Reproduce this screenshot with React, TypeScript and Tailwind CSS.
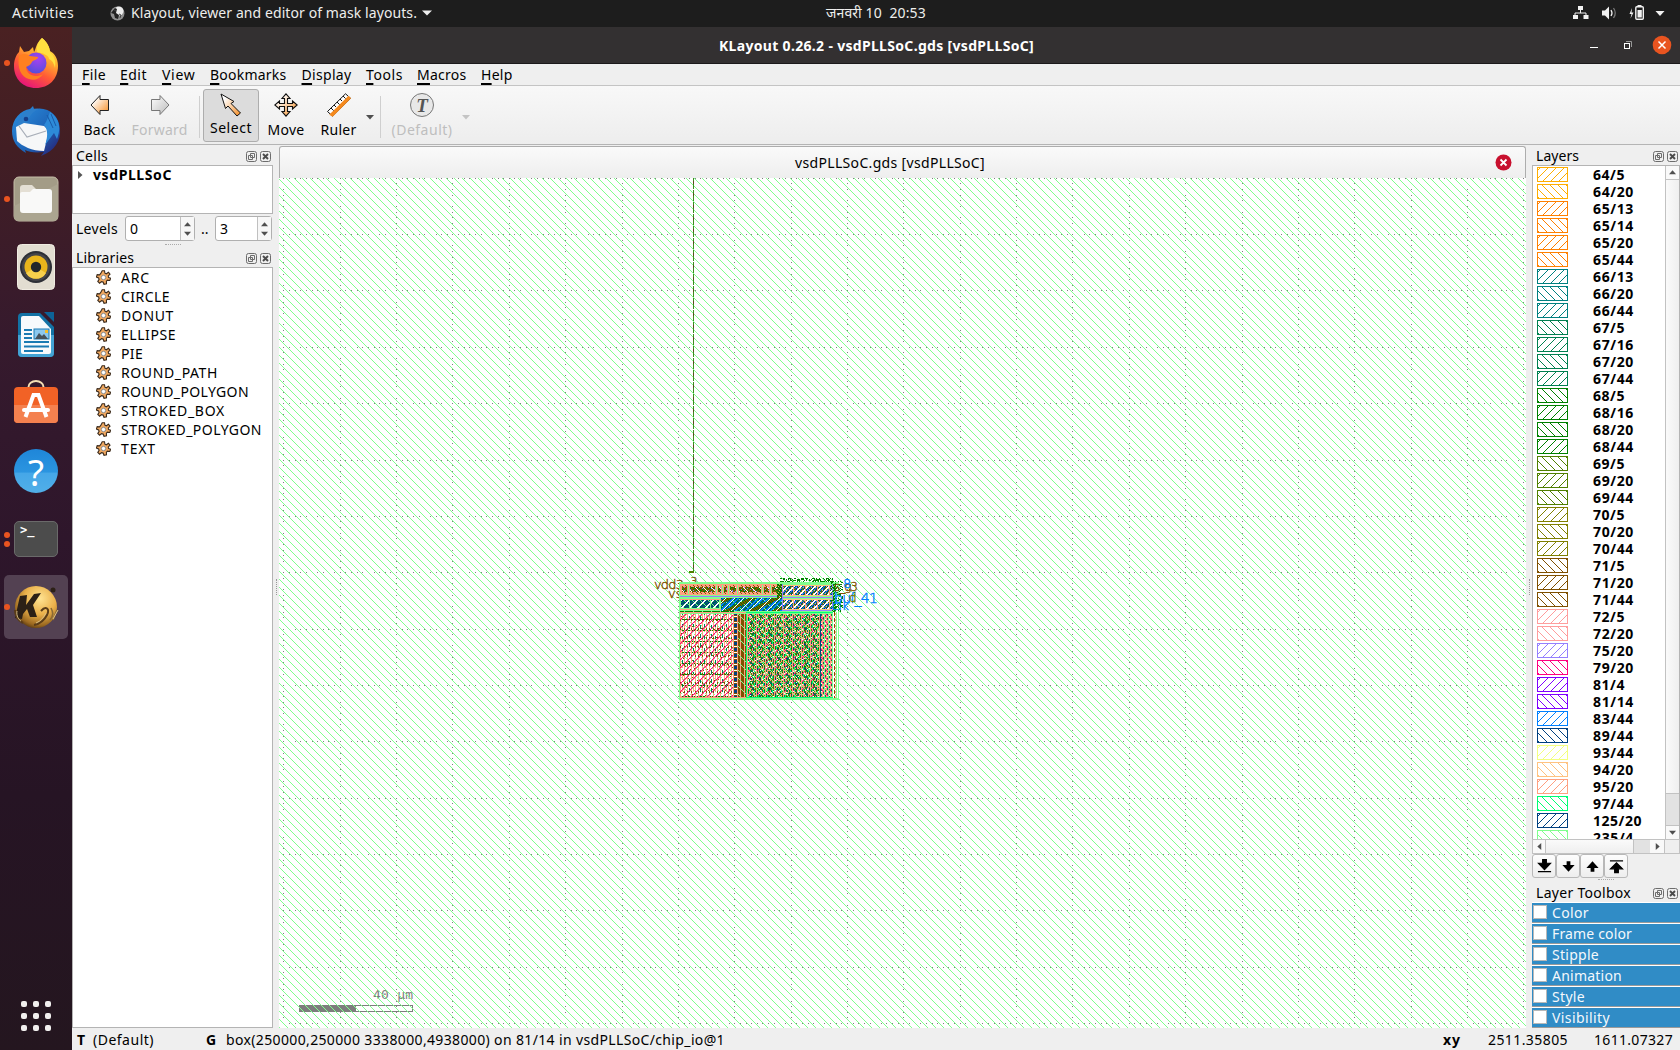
import React, { useLayoutEffect, useRef, useState } from "react";

/* Text run whose letter spacing is tuned so that it fills a given width. */
function Fit({ w, children, className = "" }: { w: number; children: React.ReactNode; className?: string }) {
  const ref = useRef<HTMLSpanElement>(null);
  const [ls, setLs] = useState(0);
  useLayoutEffect(() => {
    const el = ref.current;
    if (!el) return;
    const n = (el.textContent || "").length;
    setLs((w - el.getBoundingClientRect().width) / n);
  }, [w]);
  return (
    <span ref={ref} className={"inline-block shrink-0 whitespace-pre " + className} style={{ letterSpacing: ls }}>
      {children}
    </span>
  );
}

/* ---------- dock icons ---------- */
const Firefox = () => (
  <svg width="48" height="52" viewBox="0 0 48 52">
    <defs>
      <linearGradient id="ff1" x1="0.8" y1="0" x2="0.3" y2="1">
        <stop offset="0" stopColor="#fff44f" />
        <stop offset="0.35" stopColor="#ffb02e" />
        <stop offset="0.65" stopColor="#ff5a36" />
        <stop offset="1" stopColor="#e6127d" />
      </linearGradient>
      <radialGradient id="ff2" cx="0.6" cy="0.3" r="0.8">
        <stop offset="0" stopColor="#a742f0" />
        <stop offset="1" stopColor="#4b4fd8" />
      </radialGradient>
    </defs>
    <path d="M30 1c4 3 7 8 8 13 4 2 8 7 8 15 0 13-9 22-22 22S2 42 2 29c0-6 2-11 5-14l1-6 4 6 5-1 4-4 1 5c2-3 2-9 8-14z" fill="url(#ff1)" />
    <path d="M30 1c5 4 8 9 8 14 5 5 6 10 5 16-1-5-3-8-6-9 0-4-7-6-12-7-1-6 2-11 5-14z" fill="#ffe040" />
    <circle cx="24" cy="26" r="10.5" fill="url(#ff2)" />
    <path d="M7 19c4-3 8-2 11 0l8 1c0 3-5 3-6 5s-3 4-6 5c0 7 9 12 17 7-3 5-9 7-14 5C9 40 5 31 7 19z" fill="#ff8020" />
  </svg>
);

const Thunderbird = () => (
  <svg width="50" height="52" viewBox="0 0 50 52">
    <defs>
      <linearGradient id="tb" x1="0" y1="0" x2="1" y2="1">
        <stop offset="0" stopColor="#2c90e0" />
        <stop offset="0.6" stopColor="#1d62b5" />
        <stop offset="1" stopColor="#2a1468" />
      </linearGradient>
    </defs>
    <path d="M22 1l1 3c14-3 25 6 26 20 1 11-5 22-19 27l3-4c-9 1-15 0-19-2l1 3C6 43 1 36 1 26 1 14 10 5 19 4z" fill="url(#tb)" />
    <path d="M10 12c4-7 10-9 18-8-8 3-10 9-13 15-4 1-7 3-10 6 1-5 2-9 5-13z" fill="#2d7fcb" />
    <path d="M5 22l8-4 20 3 5 5-5 20C21 46 11 41 6 36z" fill="#f6f7f8" />
    <path d="M8 21l8 11 19-6" fill="none" stroke="#a8aeb8" strokeWidth="1.2" />
    <path d="M33 20c4 4 4 12 1 20l9-12 3 6c5-13 1-22-7-27-2 5-3 9-6 13z" fill="#2d8ad8" />
    <circle cx="15" cy="14" r="2.3" fill="#16408c" />
    <path d="M36 10l6 13M40 9l5 12" stroke="#1a5aa8" />
  </svg>
);

const Files = () => (
  <svg width="46" height="46" viewBox="0 0 46 46">
    <rect x="1" y="1" width="44" height="44" rx="5" fill="#a39c87" stroke="#c5bda8" />
    <path d="M1 30L45 8v33a4 4 0 01-4 4H5a4 4 0 01-4-4z" fill="#aba590" />
    <path d="M7 12q0-3 3-3h9l4 4v8H7z" fill="#e4dfd4" />
    <path d="M7 18q0-2 2-2h8l3-3h16q3 0 3 3v18q0 3-3 3H10q-3 0-3-3z" fill="#f9f9f8" />
  </svg>
);

const Rhythmbox = () => (
  <svg width="38" height="46" viewBox="0 0 38 46">
    <rect x="0.5" y="0.5" width="37" height="45" rx="4" fill="#e2ddd1" stroke="#f0ece2" />
    <circle cx="19" cy="23" r="16" fill="#2d2f36" />
    <circle cx="19" cy="23" r="14" fill="#45454a" />
    <circle cx="19" cy="23" r="11.5" fill="#eab51c" />
    <path d="M19 23L9 29a11.500 11.500 0 0020 0z" fill="#f6cf4c" />
    <circle cx="19" cy="23" r="5.200" fill="#23262b" />
  </svg>
);

const Writer = () => (
  <svg width="38" height="46" viewBox="0 0 38 46">
    <path d="M1 5q0-4 4-4h18l14 14v26q0 4-4 4H5q-4 0-4-4z" fill="#1272a5" />
    <path d="M1 23h36v18q0 4-4 4H5q-4 0-4-4z" fill="#43a3d4" />
    <path d="M4 6q0-2 2-2h16l12 13v23q0 2-2 2H6q-2 0-2-2z" fill="#f7fafc" />
    <path d="M27 0h10v10z" fill="#0d6397" />
    <path d="M7 18h8M7 22h8M7 26h8M7 30h25M7 34.500h25M7 39h19" stroke="#1a7bb3" strokeWidth="1.800" />
    <rect x="17" y="17" width="15" height="10" fill="#8cc8ee" stroke="#1a7bb3" />
    <path d="M18 27l4-6 3 3 2-2 4 5z" fill="#46525c" />
    <rect x="28" y="18" width="3" height="3" fill="#f5bf2a" />
  </svg>
);

const Software = () => (
  <svg width="46" height="46" viewBox="0 0 46 46">
    <path d="M15.500 9v-2a7.500 6 0 0115 0v2" fill="none" stroke="#f5dfb4" strokeWidth="2" />
    <rect x="1" y="7" width="44" height="36" rx="4" fill="#f16226" />
    <path d="M1 25h44v14a4 4 0 01-4 4H5a4 4 0 01-4-4z" fill="#f4814f" />
    <path d="M12.500 37l8-22h5l8 22" fill="none" stroke="#fff" strokeWidth="4" />
    <path d="M11 30h24" stroke="#fff" strokeWidth="4" strokeLinecap="round" />
  </svg>
);

const Help = () => (
  <span className="flex h-11 w-11 items-center justify-center rounded-full bg-[linear-gradient(#1f86d9_0%,#2b95e0_53%,#45a7e8_54%,#51afe8_100%)] text-[37px] leading-none text-white">
    ?
  </span>
);

const Terminal = () => (
  <span className="h-9 w-11 rounded-[5px] border border-[#6a6a6a] bg-[#4c4c4c] pl-[5px] pt-px font-['DejaVu_Sans_Mono'] text-[12px] font-bold leading-[14px] text-white">
    &gt;_
  </span>
);

const KBall = () => (
  <svg width="50" height="46" viewBox="0 0 50 46">
    <defs>
      <radialGradient id="kb" cx="0.6" cy="0.3" r="0.75">
        <stop offset="0" stopColor="#ffe392" />
        <stop offset="0.5" stopColor="#eab04a" />
        <stop offset="0.85" stopColor="#9a6820" />
        <stop offset="1" stopColor="#523410" />
      </radialGradient>
    </defs>
    <circle cx="25" cy="23" r="21" fill="url(#kb)" />
    <path d="M9 12l7-1-1 10 8-11 7-1-8 12 4 12h-7l-3-8-4 5-1 5-7-1c2-8 3-14 5-22z" fill="#2c2016" />
    <path d="M4 26c0 8 4 11 8 13M30 27c5-6 9-2 6 4s-8 9-13 10" fill="none" stroke="#5a3c18" strokeWidth="2" />
    <path d="M40 24c2 4 3 7-1 12M46 26l-4 10" fill="none" stroke="#8a6a34" strokeWidth="1.600" />
    <path d="M25 39c5-2 7-5 10-10M42 35l5-9M6 27c-1 5 2 9 4 10" fill="none" stroke="#d9bf84" />
    <circle cx="42" cy="6" r="2.500" fill="#2c2016" />
  </svg>
);

const dock: { icon: React.ReactNode; dots: number; active?: boolean }[] = [
  { icon: <Firefox />, dots: 1 },
  { icon: <Thunderbird />, dots: 0 },
  { icon: <Files />, dots: 1 },
  { icon: <Rhythmbox />, dots: 0 },
  { icon: <Writer />, dots: 0 },
  { icon: <Software />, dots: 0 },
  { icon: <Help />, dots: 0 },
  { icon: <Terminal />, dots: 2 },
  { icon: <KBall />, dots: 1, active: true },
];

function Dock() {
  return (
    <aside className="flex w-[72px] shrink-0 flex-col justify-between bg-[linear-gradient(#4a2122_0%,#421e24_12%,#361a2d_30%,#2e162b_50%,#261424_75%,#24161f_100%)]">
      <div className="flex flex-col gap-1 pt-1">
        {dock.map((d, i) => (
          <div key={i} className="flex h-16 items-center">
            <div className="flex w-1 flex-col items-start gap-[3px]">
              {Array.from({ length: d.dots }, (_, k) => (
                <i key={k} className="relative left-1 z-10 h-1.5 w-1.5 rounded-full bg-[#e95420]" />
              ))}
            </div>
            <div className={"flex h-16 w-16 items-center justify-center rounded-[5px] " + (d.active ? "bg-[#534152]" : "")}>{d.icon}</div>
          </div>
        ))}
      </div>
      <div className="mb-[19px] ml-[21px] grid w-[30px] grid-cols-3 gap-x-1.5 gap-y-1.5">
        {Array.from({ length: 9 }, (_, i) => (
          <i key={i} className="h-1.5 w-1.5 rounded-[2px] bg-[#f1efee]" />
        ))}
      </div>
    </aside>
  );
}

/* ---------- small drawings ---------- */
const Tri = ({ dir = "down", c = "#4f4f4f", s = 7 }: { dir?: string; c?: string; s?: number }) => (
  <svg width={s} height={s} viewBox="0 0 8 8" className="shrink-0">
    <path
      d={dir === "down" ? "M0 2h8L4 6.500z" : dir === "up" ? "M0 6h8L4 1.500z" : dir === "left" ? "M6 0v8L1.500 4z" : "M2 0v8L6.500 4z"}
      fill={c}
    />
  </svg>
);

const DockButtons = () => (
  <svg width="25" height="11" viewBox="0 0 25 11" className="shrink-0">
    <g fill="none" stroke="#6d6d6d">
      <rect x="0.500" y="0.500" width="10" height="10" rx="2" />
      <rect x="14.500" y="0.500" width="10" height="10" rx="2" />
      <path d="M4.500 2.500h4v4h-4zM2.500 4.500h4v4h-4z" />
    </g>
    <path d="M17 3l5 5M22 3l-5 5" stroke="#4a4a4a" strokeWidth="1.900" />
  </svg>
);

const PanelTitle = ({ t, w, className = "" }: { t: string; w: number; className?: string }) => (
  <div className={"flex shrink-0 items-center justify-between pl-1 " + className}>
    <Fit w={w}>{t}</Fit>
    <DockButtons />
  </div>
);

const Gear = () => (
  <svg width="15" height="15" viewBox="-7.500 -7.500 15 15">
    <g fill="#f0a860" stroke="#3a2a1c" strokeWidth="1.100">
      <path d="M-1.300-6.800h2.300l.4 2.500 1.400.6 2.200-1.600 1.500 2-1.700 1.700.2 1.500 2.200.8-.9 2.300-2.300-.4-1.100 1.100.1 2.600-2.500.5-.9-2.300-1.600-.4-1.900 1.600-1.800-1.800 1.300-2-.5-1.500-2.200-.8.8-2.400 2.300.2 1.100-1.200z" />
    </g>
    <circle r="2.200" fill="#fff" stroke="#8c8c8c" />
  </svg>
);

const Grad = () => (
  <svg width="0" height="0" className="absolute">
    <defs>
      <linearGradient id="org" x1="0" x2="1" y1="0" y2="1">
        <stop offset="0.200" stopColor="#fff" />
        <stop offset="1" stopColor="#f58a1e" />
      </linearGradient>
      <linearGradient id="gry" x1="0" x2="1" y1="0" y2="1">
        <stop offset="0" stopColor="#fff" />
        <stop offset="1" stopColor="#bbb" />
      </linearGradient>
    </defs>
  </svg>
);

const BackIcon = () => (
  <svg width="20" height="22" viewBox="0 0 20 22">
    <path d="M1 11L10 1.500v4h8.500v11H10v4z" fill="url(#org)" stroke="#222" />
  </svg>
);
const FwdIcon = () => (
  <svg width="20" height="22" viewBox="0 0 20 22">
    <path d="M19 11L10 1.500v4H1.500v11H10v4z" fill="url(#gry)" stroke="#777" />
  </svg>
);
const SelectIcon = () => (
  <svg width="24" height="24" viewBox="0 0 24 24">
    <path d="M2 1l13 7.500-3 2 9.500 9.500-3.500 3-9-10-2.500 2.500z" fill="url(#org)" stroke="#111" />
  </svg>
);
const MoveIcon = () => (
  <svg width="24" height="24" viewBox="0 0 24 24">
    <path d="M12 .8l4 4.700h-2.500v5h5V8l4.700 4-4.700 4v-2.500h-5v5H16l-4 4.700-4-4.700h2.500v-5h-5V16L.8 12l4.700-4v2.500h5v-5H8z" fill="url(#org)" stroke="#111" strokeWidth="1.100" />
  </svg>
);
const RulerIcon = () => (
  <svg width="26" height="24" viewBox="0 0 26 24">
    <path d="M1.500 18.500L19.500.8l5 4.500L6.500 23z" fill="#fff" stroke="#111" />
    <path d="M4.500 21.500L22.500 3.800l1.500 1.500L6.500 22.700z" fill="#f58a1e" stroke="#f58a1e" strokeWidth="1.500" />
    <path d="M5 15l2.500 2.500M8 12l2 2M11 9l2.500 2.500M14 6l2 2M17 3l2.500 2.500" stroke="#111" />
  </svg>
);

/* ---------- layer list ---------- */
const layers: [string, string][] = [
  ["64/5", "#ffae00"], ["64/20", "#ffae00"], ["65/13", "#ff8000"], ["65/14", "#ff8000"], ["65/20", "#ff8000"], ["65/44", "#ff8000"],
  ["66/13", "#008080"], ["66/20", "#008080"], ["66/44", "#008080"], ["67/5", "#008050"], ["67/16", "#008050"], ["67/20", "#008050"],
  ["67/44", "#008050"], ["68/5", "#008000"], ["68/16", "#008000"], ["68/20", "#008000"], ["68/44", "#008000"], ["69/5", "#508000"],
  ["69/20", "#508000"], ["69/44", "#508000"], ["70/5", "#808000"], ["70/20", "#808000"], ["70/44", "#808000"], ["71/5", "#805000"],
  ["71/20", "#805000"], ["71/44", "#805000"], ["72/5", "#ff9d9d"], ["72/20", "#ff9d9d"], ["75/20", "#9580ff"], ["79/20", "#ff0080"],
  ["81/4", "#8000ff"], ["81/14", "#8000ff"], ["83/44", "#0080ff"], ["89/44", "#004080"], ["93/44", "#f3ff80"], ["94/20", "#ffc280"],
  ["95/20", "#ffa080"], ["97/44", "#00ff73"], ["125/20", "#004080"], ["235/4", "#80ff8d"],
];

const Swatch = ({ c, fwd }: { c: string; fwd: boolean }) => (
  <svg width="31" height="15" viewBox="0 0 31 15" shapeRendering="crispEdges" className="shrink-0">
    <rect x="0.500" y="0.500" width="30" height="14" fill="#fff" stroke={c} />
    <path
      d={Array.from({ length: 29 * 13 }, (_, k) => [1 + (k % 29), 1 + Math.floor(k / 29)])
        .filter(([x, y]) => (fwd ? (x + y) % 8 === 3 : (x - y + 32) % 8 === 4))
        .map(([x, y]) => `M${x} ${y}h1v1h-1z`)
        .join("")}
      fill={c}
    />
  </svg>
);

/* ---------- layout canvas ---------- */
const X0 = 279, Y0 = 178, X1 = 1526, Y1 = 1028, STEP = 56.36;
const gridPath = (() => {
  let d = "";
  for (let k = 0; k <= 22; k++) {
    const x = Math.floor(283.9 + STEP * k);
    for (let j = 0; j <= 150; j++) d += `M${x} ${Math.floor(178.2 + (STEP / 10) * j)}h1v1h-1z`;
  }
  for (let k = 0; k <= 15; k++) {
    const y = Math.floor(178.2 + STEP * k);
    for (let j = 0; j <= 220; j++) d += `M${Math.floor(283.9 + (STEP / 10) * j)} ${y}h1v1h-1z`;
  }
  return d;
})();

const C = {
  g: "#80ff8d", s: "#ffa080", p: "#ff0080", t: "#008050", d: "#008000", b: "#805000", n: "#004080",
  v: "#9580ff", u: "#0080ff", e: "#00ff73", w: "#ffffff", c: "#ffc280", o: "#508000",
};
type K = keyof typeof C;
const m = (a: number, n: number) => ((a % n) + n) % n;

function chip(x: number, y: number): K | null {
  /* outer frame */
  if (x < 680 || x > 837 || y < 584 || y > 697) return "g";
  /* top left row of cells */
  if (y < 598 && x < 777) {
    if (y < 584 || y > 594) return y === 596 ? "v" : "g";
    if (x < 682 || y < 585 || y > 593) return "s";
    const gaps = [687, 715, 721, 727, 736, 761, 769];
    for (const q of gaps) if (x >= q && x < q + 3) return x === q + 1 ? "g" : "s";
    if (y < 587 || y > 591) return m(x - y, 4) ? "s" : "b";
    return m(x - y, 8) === 4 ? "w" : m(x + y, 4) < 2 ? "b" : m(x + 2 * y, 5) < 2 ? "d" : m(x, 3) ? "o" : "v";
  }
  if (y < 611 && x < 721) {
    if (x < 681 || x > 718 || y < 600 || y > 607) return y === 599 || y === 609 ? "s" : "g";
    if (x === 689 || x === 710) return "g";
    return m(x + y, 8) < 2 ? "w" : m(x - y, 8) === 4 ? "g" : m(x + 2 * y, 5) < 2 ? "t" : "n";
  }
  /* right hand blocks */
  if (x > 781 && x < 833 && y < 611) {
    if (y === 597 || y === 610 || x === 782 || x === 832) return "v";
    if (y === 584 || y === 596 || y === 598) return "g";
    if (y === 585 || y === 595 || y === 599 || y === 609) return "c";
    if (x % 12 === 1) return "s";
    return m(x + y, 7) < 2 ? "w" : m(x + y, 7) === 3 ? "u" : m(x * 2 + y, 5) < 2 ? "n" : m(x - y, 4) === 0 ? "s" : m(x - y, 8) === 1 ? "v" : "o";
  }
  if (y < 611 && x < 782) {
    if (y < 597) return m(x * 2 + y, 3) ? "d" : m(y, 2) ? "b" : "s";
    if (m(x + y, 9) < 1) return "w";
    if (m(x + 2 * y, 24) < 8) return m(x - y, 3) ? "b" : "d";
    return m(x + y, 5) < 2 ? "u" : m(x - y, 8) === 4 ? "g" : m(x + y * 2, 3) ? "t" : "n";
  }
  if (x > 832) {
    if (y < 612) return x < 836 ? (m(x + y, 3) ? "d" : "g") : null;
    return x === 834 && m(y, 6) < 4 ? "b" : x === 836 ? "g" : x === 835 && m(y, 3) ? "s" : "w";
  }
  if (y < 614) return y === 611 ? (x < 734 && m(x, 9) ? "d" : "g") : y === 612 ? (x < 746 ? "s" : "e") : "g";
  if (y > 696) return x > 745 ? "e" : "s";
  /* capacitor array */
  if (x < 733) {
    const q = m(x - 680, 11);
    if (m(x + y, 8) === 3) return "p";
    if (q === 0 || q === 4 || q === 7) return m(y, 9) < 7 ? "s" : "b";
    if (m(y, 11) === 3) return m(x, 3) ? "d" : "s";
    if (q === 2) return m(y, 12) < 3 ? "t" : m(y, 12) < 8 ? "s" : "w";
    if (q === 9) return m(y + 5, 9) < 4 ? "t" : "w";
    if (m(x - y, 8) === 4) return "g";
    return m(x + y, 8) === 4 ? "s" : m(x * 5 + y * 3, 17) === 0 ? "b" : "w";
  }
  if (x < 746) {
    if (x === 733 || x === 737) return "s";
    if (x < 737) return m(y, 6) < 3 ? "n" : m(y, 6) === 4 ? "w" : "b";
    return m(x - y, 8) === 4 ? "g" : m(x, 4) === 0 ? "s" : "b";
  }
  if (x === 746) return "e";
  if (x === 820) return m(y, 9) < 7 ? "n" : "t";
  if (x > 820) {
    if (x % 4 === 0) return "g";
    if (m(x - y, 8) === 4) return "p";
    return x % 4 === 2 ? "s" : m(x + y, 5) < 2 ? "t" : m(y, 4) < 3 ? "s" : "w";
  }
  const q = m(x - 747, 9);
  if (m(x - y, 8) === 4) return "g";
  if (q === 0) return "s";
  if (q === 5) return m(y, 6) < 3 ? "s" : "t";
  if (m(x + y, 8) === 3) return q < 4 ? "p" : "o";
  if (q === 2 || q === 7) return m(y + q, 7) < 4 ? "s" : "e";
  if (m(x - y, 8) < 2) return m(y, 5) < 3 ? "t" : "n";
  if (m(x + 2 * y, 5) === 0) return "w";
  return m(x + y, 4) < 2 ? "o" : m(y, 3) ? "s" : "d";
}

const chipPaths = (() => {
  const out: Record<string, string> = {};
  for (let y = 582; y < 700; y++) {
    let start = 679;
    let prev: K | null = null;
    for (let x = 679; x <= 839; x++) {
      const k = x === 839 ? null : chip(x, y);
      if (k !== prev) {
        if (prev) out[prev] = (out[prev] || "") + `M${start} ${y}h${x - start}v1h-${x - start}z`;
        start = x;
        prev = k;
      }
    }
  }
  return out;
})();

/* dark speckle along the upper edge and the upper right corner of the cell */
const speckle = (() => {
  let seed = 7;
  const rnd = () => (seed = (seed * 16807) % 2147483647) / 2147483647;
  let d = "";
  for (let i = 0; i < 140; i++) d += `M${780 + Math.floor(rnd() * 53)} ${578 + Math.floor(rnd() * 4)}h1v1h-1z`;
  for (let i = 0; i < 130; i++) d += `M${831 + Math.floor(rnd() * 12)} ${581 + Math.floor(rnd() * 31)}h1v1h-1z`;
  return d;
})();

function LayoutCanvas() {
  return (
    <svg width={X1 - X0} height={Y1 - Y0} viewBox={`${X0} ${Y0} ${X1 - X0} ${Y1 - Y0}`} shapeRendering="crispEdges" className="block">
      <defs>
        <pattern id="hatch" x="0" y="0" width="8" height="8" patternUnits="userSpaceOnUse">
          <path
            d={Array.from({ length: 8 }, (_, y) => `M${(y + 4) % 8} ${y}h1v1h-1z`).join("")}
            fill="#80ff8d"
          />
        </pattern>
      </defs>
      <rect x={X0} y={Y0} width={X1 - X0} height={Y1 - Y0} fill="#fff" />
      <path d={gridPath} fill="#808080" />
      <g fill="#7d7d7d">
        <rect x="299" y="1005" width="57" height="7" />
        <rect x="299.500" y="1005.500" width="113" height="6" fill="none" stroke="#7d7d7d" />
        <text x="373" y="999" fontSize="13" textLength="40" fontFamily="DejaVu Sans Mono, monospace" fontWeight="200">40 µm</text>
      </g>
      <rect x={X0} y={Y0} width={X1 - X0} height={Y1 - Y0} fill="url(#hatch)" />
      <path d="M693.500 178V571" stroke="#3c8c1c" strokeDasharray="5 1" />
      <path d="M693.500 181V571" stroke="#5a4a1c" strokeDasharray="3 9" />
      <rect x="689" y="571" width="5" height="2" fill="#508000" />
      <g fontFamily="DejaVu Sans, sans-serif" fontWeight="200" strokeWidth="0.400">
        <text x="654" y="589" fontSize="13" textLength="30" fill="#805000" stroke="#805000">vdd3</text>
        <text x="668" y="598" fontSize="13" fill="#805000" stroke="#805000">vs</text>
        <text x="685" y="585" fontSize="11" fill="#805000" stroke="#805000">_3</text>
      </g>
      {Object.entries(chipPaths).map(([k, d]) => (
        <path key={k} d={d} fill={C[k as K]} />
      ))}
      <path d={speckle} fill="#008000" />
      <g fontFamily="DejaVu Sans, sans-serif" fontWeight="200" strokeWidth="0.400">
        <text x="834" y="591" fontSize="12" textLength="24" fill="#805000" stroke="#805000">s_g3</text>
        <text x="843" y="588" fontSize="13" fill="#0080ff" stroke="#0080ff">8</text>
        <text x="834" y="603" fontSize="14" textLength="44" fill="#0080ff" stroke="#0080ff">buf_41</text>
        <text x="849" y="602" fontSize="12" fill="#808000" stroke="#808000">d</text>
        <text x="832" y="610" fontSize="12" fill="#0080ff" stroke="#0080ff">clk</text>
      </g>
    </svg>
  );
}

/* ---------- main parts ---------- */
function TopBar() {
  return (
    <header className="flex h-[27px] shrink-0 items-center bg-[#1d1d1d] pb-px text-[14px] text-[#eeeeec]">
      <div className="flex w-[826px] shrink-0 items-center pl-3">
        <Fit w={62}>Activities</Fit>
        <svg width="15" height="15" viewBox="0 0 15 15" className="ml-9 mr-[6px]">
          <circle cx="7.500" cy="7.500" r="7" fill="#8f8f8f" />
          <circle cx="9" cy="5" r="4.500" fill="#ececec" />
          <path d="M1 7l4-5 2 1-1 4 3 2-1 4-3-1-1-4z" fill="#222" />
          <path d="M9 8l2 1-1 3M4 4l2 1" stroke="#444" fill="none" />
        </svg>
        <Fit w={286}>Klayout, viewer and editor of mask layouts.</Fit>
        <svg width="10" height="6" viewBox="0 0 10 6" className="ml-[5px]"><path d="M0 .5h10L5 5.500z" fill="#eee" /></svg>
      </div>
      <div className="w-[100px] shrink-0"><Fit w={100}>{"जनवरी 10  20:53"}</Fit></div>
      <div className="flex flex-1 flex-col items-end pr-[14px]">
        <svg width="94" height="17" viewBox="1572 5 94 17" fill="#f2f2f2">
          <rect x="1578" y="6" width="5" height="4" />
          <path d="M1580.500 10v3M1575 16v-3h11v3" fill="none" stroke="#f2f2f2" />
          <rect x="1573" y="15" width="5" height="4" /><rect x="1583.500" y="15" width="5" height="4" />
          <path d="M1602 10.500h3l4-4v13l-4-4h-3z" />
          <path d="M1611 10q2 3 0 6" fill="none" stroke="#f2f2f2" strokeWidth="1.300" />
          <path d="M1613.500 8q3.500 5 0 10" fill="none" stroke="#777" strokeWidth="1.300" />
          <path d="M1632 8l-2.500 6h2l-1 4.500 3-6h-2z" />
          <rect x="1635.800" y="6.800" width="7.500" height="12.500" rx="1" fill="none" stroke="#f2f2f2" strokeWidth="1.400" />
          <rect x="1637.500" y="5" width="4" height="2" /><rect x="1637.500" y="10" width="4.300" height="7.500" />
          <path d="M1655.500 11h9l-4.500 5z" />
        </svg>
      </div>
    </header>
  );
}

function TitleBar() {
  return (
    <div className="flex h-[37px] shrink-0 items-center border-b border-[#1c1a1b] bg-[#333031] text-white">
      <div className="w-[647px]" />
      <Fit w={315} className="pt-px text-[14px] font-bold">KLayout 0.26.2 - vsdPLLSoC.gds [vsdPLLSoC]</Fit>
      <svg width="90" height="20" viewBox="1584 35 90 20" className="ml-auto mr-1.5">
        <path d="M1590 47.500h8" stroke="#fff" />
        <path d="M1626 41.500h5.500v5.500" fill="none" stroke="#999" />
        <rect x="1624.500" y="43.500" width="5" height="5" fill="none" stroke="#fff" />
        <circle cx="1662" cy="45" r="9.300" fill="#e95420" />
        <path d="M1658.500 41.500l7 7M1665.500 41.500l-7 7" stroke="#fff" strokeWidth="1.500" />
      </svg>
    </div>
  );
}

const menus: [string, number, number][] = [
  ["File", 24, 14], ["Edit", 27, 15], ["View", 33.5, 14.5], ["Bookmarks", 76.5, 15], ["Display", 50, 14.5], ["Tools", 37, 14], ["Macros", 49.5, 14.5], ["Help", 31.5, 0],
];

function Menu() {
  return (
    <nav className="flex h-[22px] shrink-0 items-center border-b border-[#c4c4c4] bg-[#efefef] pl-2.5">
      {menus.map(([t, w, gap]) => (
        <div key={t} className="flex shrink-0">
          <Fit w={w}>
            <u className="decoration-[1.500px] underline-offset-[3px]">{t[0]}</u>
            {t.slice(1)}
          </Fit>
          <span className="shrink-0" style={{ width: gap }} />
        </div>
      ))}
    </nav>
  );
}

const Tool = ({ icon, t, w, className }: { icon: React.ReactNode; t: string; w: number; className: string }) => (
  <div className={"flex h-[53px] shrink-0 flex-col items-center justify-between pb-[3px] pt-[3px] " + className}>
    <div className="flex h-6 items-center">{icon}</div>
    <Fit w={w} className="leading-5">{t}</Fit>
  </div>
);

function Toolbar() {
  return (
    <div className="flex h-[59px] shrink-0 items-start border-b border-[#b4b4b4] bg-[linear-gradient(#f8f8f8,#ededed)] pt-1">
      <Tool icon={<BackIcon />} t="Back" w={32} className="w-[55px]" />
      <Tool icon={<FwdIcon />} t="Forward" w={56} className="w-[65px] text-[#bebebe]" />
      <i className="ml-[7px] mt-1.5 h-[42px] w-px bg-[#cfcfcf]" />
      <Tool icon={<SelectIcon />} t="Select" w={42} className="-mt-px ml-[3px] w-14 rounded-[3px] border border-[#adadad] bg-[#dcdcdc]" />
      <Tool icon={<MoveIcon />} t="Move" w={37} className="w-[54px]" />
      <Tool icon={<RulerIcon />} t="Ruler" w={36} className="w-[51px]" />
      <div className="flex h-[53px] items-center pl-[2px]"><Tri s={8} /></div>
      <i className="ml-[6px] mt-1.5 h-[42px] w-px bg-[#cfcfcf]" />
      <Tool
        icon={
          <span className="flex h-6 w-6 items-center justify-center rounded-full border-[1.500px] border-[#777] bg-[#e8e8e8] font-['Liberation_Serif'] text-[19px] font-bold italic leading-none text-[#555]">T</span>
        }
        t="(Default)"
        w={61}
        className="ml-1.5 w-[70px] text-[#bebebe]"
      />
      <div className="flex h-[53px] items-center pl-[5px]"><Tri s={8} c="#c4c4c4" /></div>
    </div>
  );
}

const Spin = ({ v, className }: { v: string; className: string }) => (
  <div className={"flex h-[25px] shrink-0 rounded-[3px] border border-[#b0b0b0] bg-white " + className}>
    <span className="flex-1 pl-1 leading-[23px]">{v}</span>
    <span className="flex w-[14px] flex-col items-center justify-center gap-0.5 border-l border-[#c0c0c0] bg-[#f7f7f7]">
      <Tri dir="up" /><Tri />
    </span>
  </div>
);

const libs: [string, number][] = [
  ["ARC", 29], ["CIRCLE", 49], ["DONUT", 53], ["ELLIPSE", 55], ["PIE", 22], ["ROUND_PATH", 97], ["ROUND_POLYGON", 128], ["STROKED_BOX", 104], ["STROKED_POLYGON", 141], ["TEXT", 35],
];

function LeftPanel() {
  return (
    <div className="flex w-[201px] shrink-0 flex-col">
      <PanelTitle t="Cells" w={32} className="mt-0.5 h-[18px] pr-0.5" />
      <div className="flex h-[49px] shrink-0 items-start border border-[#b4b4b4] bg-white pl-[3px]">
        <span className="pt-[5px]"><Tri dir="right" c="#555" s={8} /></span>
        <Fit w={79} className="ml-[9px] text-[14px] font-bold leading-[18px]">vsdPLLSoC</Fit>
      </div>
      <div className="mt-0.5 flex h-[25px] shrink-0 items-center pl-1">
        <Fit w={42}>Levels</Fit>
        <Spin v="0" className="ml-[7px] w-[70px]" />
        <span className="w-5 pl-[6px]">..</span>
        <Spin v="3" className="w-[57px]" />
      </div>
      <div className="mt-[3px] h-px w-4 self-center border-t border-dotted border-[#aaa]" />
      <PanelTitle t="Libraries" w={58} className="mt-[4px] h-[18px] pr-0.5" />
      <div className="flex flex-1 flex-col border border-[#b4b4b4] bg-white">
        {libs.map(([t, w]) => (
          <div key={t} className="flex h-[19px] items-center pl-[23px]">
            <Gear />
            <Fit w={w} className="ml-[10px]">{t}</Fit>
          </div>
        ))}
      </div>
    </div>
  );
}

function CenterPanel() {
  return (
    <div className="flex w-[1247px] shrink-0 flex-col">
      <div className="mt-[1px] flex h-8 shrink-0 items-center rounded-t-[3px] border border-b-0 border-[#adadad] bg-[linear-gradient(#fafafa,#eeeeee)] pl-[515px] pr-[13px]">
        <Fit w={190}>vsdPLLSoC.gds [vsdPLLSoC]</Fit>
        <svg width="17" height="17" viewBox="0 0 17 17" className="ml-auto">
          <circle cx="8.500" cy="8.500" r="8" fill="#c8102e" />
          <path d="M5.500 5.500l6 6M11.500 5.500l-6 6" stroke="#fff" strokeWidth="1.800" />
        </svg>
      </div>
      <LayoutCanvas />
    </div>
  );
}

const btn = "flex items-center justify-center bg-[#f9f9f9] border-[#c2c2c2]";

function RightPanel() {
  return (
    <div className="flex w-[148px] shrink-0 flex-col">
      <PanelTitle t="Layers" w={43} className="mt-0.5 h-[18px] pr-0.5" />
      <div className="flex h-[674px] shrink-0 border border-b-0 border-[#b4b4b4] bg-white">
        <div className="flex-1 overflow-hidden pl-1">
          {layers.map(([t, c], i) => (
            <div key={t} className="flex h-[17px] items-start pt-px">
              <Swatch c={c} fwd={i % 2 === 0} />
              <Fit w={t.length === 4 ? 32 : t === "125/20" ? 49 : 41} className="ml-[25px] text-[14px] font-bold leading-[15px]">{t}</Fit>
            </div>
          ))}
        </div>
        <div className="flex w-[14px] shrink-0 flex-col border-l border-[#c2c2c2] bg-[#e2e2e2]">
          <div className={btn + " h-[14px] border-b"}><Tri dir="up" /></div>
          <div className="h-[614px] border-b border-[#c2c2c2] bg-[linear-gradient(90deg,#fafafa,#efefef)]" />
          <div className={btn + " mt-auto h-[14px] border-t"}><Tri /></div>
        </div>
      </div>
      <div className="flex h-[15px] shrink-0 border border-[#c2c2c2] bg-[#e2e2e2]">
        <div className={btn + " w-[13px] border-r"}><Tri dir="left" /></div>
        <div className="w-[88px] border-r border-[#c2c2c2] bg-[linear-gradient(#fafafa,#efefef)]" />
        <div className={btn + " ml-[16px] w-[14px]"}><Tri dir="right" /></div>
        <div className="flex-1 border-l border-[#c2c2c2] bg-[#efefef]" />
      </div>
      <div className="flex h-6 shrink-0">
        {["M1 13h14M6 0h4v4h4.500L8 11 1.500 4H6z", "M6 2h4v4h4.500L8 13 1.500 6H6z", "M6 13h4V9h4.500L8 2 1.500 9H6z", "M1 1.500h14M6 14h4v-4h4.500L8 3.500 1.500 10H6z"].map((d, i) => (
          <span key={d} className="flex h-6 w-6 items-center justify-center rounded-[3px] border border-[#b8b8b8] bg-[linear-gradient(#fdfdfd,#eeeeee)]">
            <svg width="15" height="15" viewBox="0 0 16 15"><path d={d} fill="#000" stroke="#000" strokeWidth={i % 3 === 0 ? 1.2 : 0} /></svg>
          </span>
        ))}
      </div>
      <div className="mt-px h-px w-4 self-center border-t border-dotted border-[#aaa]" />
      <PanelTitle t="Layer Toolbox" w={95} className="mt-[4px] h-[18px] pr-0.5" />
      {([["Color", 37], ["Frame color", 80], ["Stipple", 47], ["Animation", 70], ["Style", 33], ["Visibility", 58]] as [string, number][]).map(([t, w]) => (
        <div key={t} className="flex h-[21px] shrink-0 items-center border-b border-t border-b-[#9a9a9a] border-t-white bg-[#308cc6] text-[#f4f8fc]">
          <i className="ml-px mt-[2px] h-[14px] w-[14px] self-start border border-[#b8b8b8] bg-white" />
          <Fit w={w} className="ml-[5px] leading-[18px]">{t}</Fit>
        </div>
      ))}
    </div>
  );
}

function StatusBar() {
  return (
    <footer className="flex h-[22px] shrink-0 items-center bg-[#efefef] pl-[5px] pt-0.5">
      <Fit w={9} className="font-bold">T</Fit>
      <Fit w={61} className="ml-[7px]">(Default)</Fit>
      <Fit w={10} className="ml-[52px] font-bold">G</Fit>
      <Fit w={499} className="ml-[10px]">box(250000,250000 3338000,4938000) on 81/14 in vsdPLLSoC/chip_io@1</Fit>
      <Fit w={18} className="ml-auto font-bold">xy</Fit>
      <Fit w={80} className="ml-[27px]">2511.35805</Fit>
      <Fit w={79} className="ml-[26px] mr-[7px]">1611.07327</Fit>
    </footer>
  );
}

const Handle = () => <i className="h-4 w-px self-center border-l border-dotted border-[#999]" />;

export default function App() {
  return (
    <div className="flex h-[1050px] w-[1680px] flex-col overflow-hidden bg-[#efefef] font-['Noto_Sans','Open_Sans',sans-serif] text-[14px] leading-[18px] text-black">
      <Grad />
      <TopBar />
      <div className="flex min-h-0 flex-1">
        <Dock />
        <main className="flex min-w-0 flex-1 flex-col">
          <TitleBar />
          <Menu />
          <Toolbar />
          <div className="flex min-h-0 flex-1">
            <LeftPanel />
            <div className="flex w-[6px] shrink-0 justify-center"><Handle /></div>
            <CenterPanel />
            <div className="flex w-[6px] shrink-0 justify-center"><Handle /></div>
            <RightPanel />
          </div>
          <StatusBar />
        </main>
      </div>
    </div>
  );
}
